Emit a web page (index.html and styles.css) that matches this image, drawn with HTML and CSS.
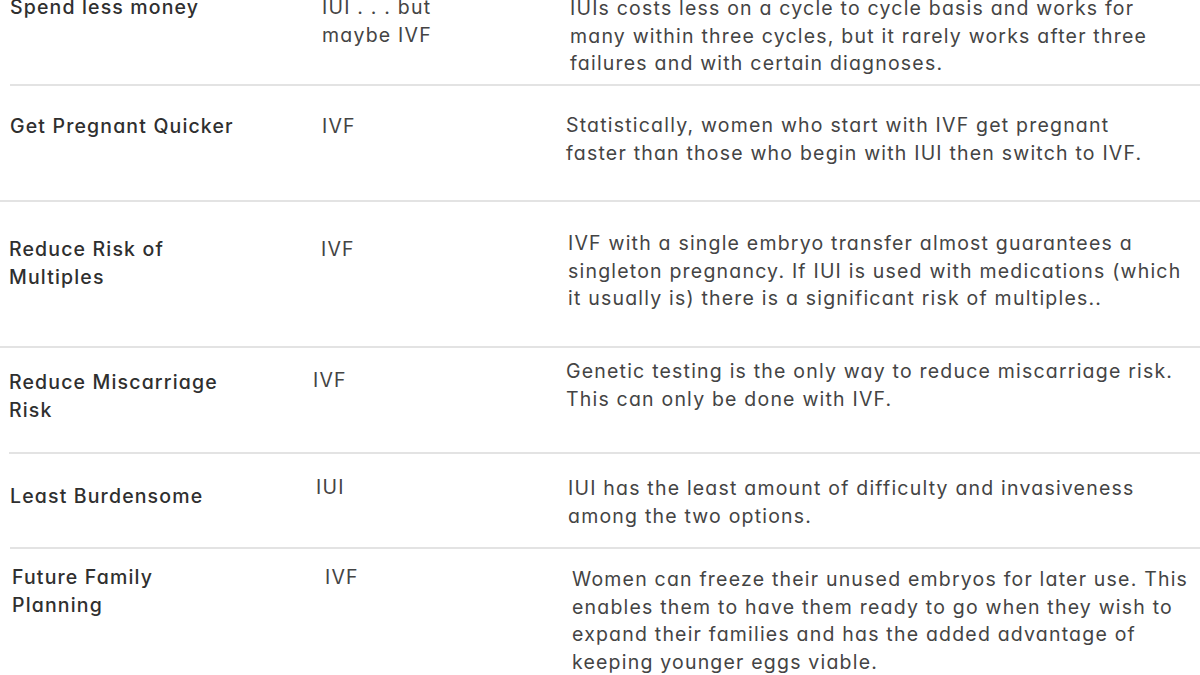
FILE: index.html
```html
<!DOCTYPE html>
<html lang="en">
<head>
<meta charset="utf-8">
<title>IUI vs IVF</title>
<link rel="stylesheet" href="styles.css">
</head>
<body>
<div class="table">
  <div class="row r1">
    <div class="cell c1">Spend less money</div>
    <div class="cell c2">IUI . . . but<br>maybe IVF</div>
    <div class="cell c3">IUIs costs less on a cycle to cycle basis and works for<br>many within three cycles, but it rarely works after three<br>failures and with certain diagnoses.</div>
  </div>
  <div class="row r2">
    <div class="cell c1">Get Pregnant Quicker</div>
    <div class="cell c2">IVF</div>
    <div class="cell c3">Statistically, women who start with IVF get pregnant<br>faster than those who begin with IUI then switch to IVF.</div>
  </div>
  <div class="row r3">
    <div class="cell c1">Reduce Risk of<br>Multiples</div>
    <div class="cell c2">IVF</div>
    <div class="cell c3">IVF with a single embryo transfer almost guarantees a<br>singleton pregnancy. If IUI is used with medications (which<br>it usually is) there is a significant risk of multiples..</div>
  </div>
  <div class="row r4">
    <div class="cell c1">Reduce Miscarriage<br>Risk</div>
    <div class="cell c2">IVF</div>
    <div class="cell c3">Genetic testing is the only way to reduce miscarriage risk.<br>This can only be done with IVF.</div>
  </div>
  <div class="row r5">
    <div class="cell c1">Least Burdensome</div>
    <div class="cell c2">IUI</div>
    <div class="cell c3">IUI has the least amount of difficulty and invasiveness<br>among the two options.</div>
  </div>
  <div class="row r6">
    <div class="cell c1">Future Family<br>Planning</div>
    <div class="cell c2">IVF</div>
    <div class="cell c3">Women can freeze their unused embryos for later use. This<br>enables them to have them ready to go when they wish to<br>expand their families and has the added advantage of<br>keeping younger eggs viable.</div>
  </div>
</div>
</body>
</html>
```
FILE: styles.css
```css
html, body {
  margin: 0;
  padding: 0;
  background: #ffffff;
  overflow: hidden;
}

body {
  width: 1200px;
  height: 675px;
  font-family: Inter, "Noto Sans", "Liberation Sans", sans-serif;
  font-feature-settings: "cv11" 1;
  color: #3b3b3b;
}

.table {
  margin-top: -6px;
}

.row {
  display: grid;
  grid-template-columns: calc(var(--x2) - var(--x1)) calc(var(--x3) - var(--x2)) 1fr;
  align-items: start;
  margin-left: var(--ls);
  padding-left: calc(var(--x1) - var(--ls));
  height: var(--h);
  border-bottom: 2px solid #e3e3e3;
  box-sizing: content-box;
  overflow: hidden;
}

.cell {
  font-size: 19.5px;
  line-height: 27.5px;
  white-space: nowrap;
  letter-spacing: 1.2px;
}

.c1 {
  padding-top: var(--t1);
  font-weight: 500;
  color: #2f2f2f;
  letter-spacing: 1.15px;
}

.c2 {
  padding-top: var(--t2);
  color: #444444;
}

.c3 {
  padding-top: var(--t3);
  color: #444444;
}

.r1 { --ls: 10px; --x1: 10px; --x2: 322px; --x3: 570px; --h: 90px;  --t1: 0px;  --t2: 0px;  --t3: 1px; }
.r2 { --ls: 0px;  --x1: 10px; --x2: 322px; --x3: 566px; --h: 114px; --t1: 27px; --t2: 27px; --t3: 26px; }
.r3 { --ls: 0px;  --x1: 9px;  --x2: 321px; --x3: 568px; --h: 144px; --t1: 34px; --t2: 34px; --t3: 28px; }
.r4 { --ls: 9px;  --x1: 9px;  --x2: 313px; --x3: 566px; --h: 104px; --t1: 21px; --t2: 19px; --t3: 10px; }
.r5 { --ls: 10px; --x1: 10px; --x2: 316px; --x3: 568px; --h: 93px;  --t1: 29px; --t2: 20px; --t3: 21px; }
.r6 { --ls: 0px;  --x1: 12px; --x2: 325px; --x3: 572px; --h: 140px; --t1: 15px; --t2: 15px; --t3: 17px; border-bottom: none; }
```
